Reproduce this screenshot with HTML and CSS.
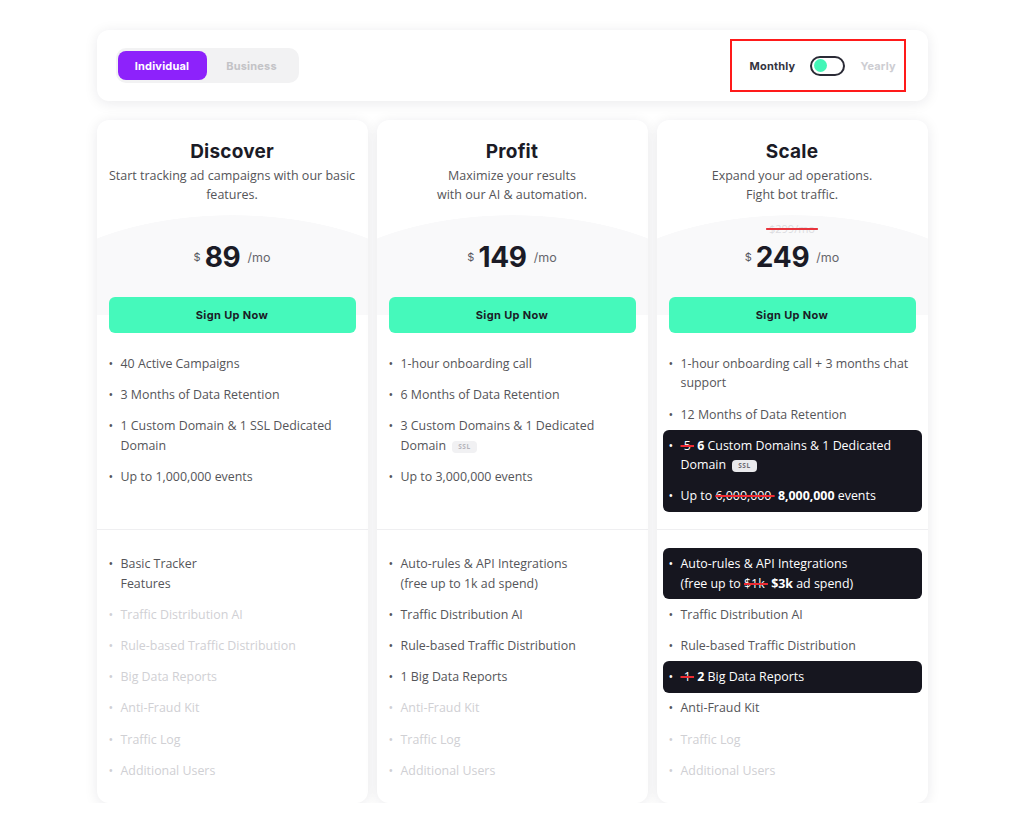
FILE: index.html
```html
<!DOCTYPE html>
<html lang="en">
<head>
<meta charset="utf-8">
<title>Pricing</title>
<link rel="stylesheet" href="styles.css">
</head>
<body>
<div class="page">
  <div class="topbar">
    <div class="seg">
      <span class="seg-btn active">Individual</span>
      <span class="seg-btn">Business</span>
    </div>
    <div class="period">
      <span class="per-on">Monthly</span>
      <span class="switch"><span class="knob"></span></span>
      <span class="per-off">Yearly</span>
    </div>
  </div>

  <div class="plans">
    <div class="card">
      <div class="head">
        <h2>Discover</h2>
        <p>Start tracking ad campaigns with our basic features.</p>
      </div>
      <div class="pricing">
        <div class="old">&nbsp;</div>
        <div class="price"><span class="cur">$</span><span class="amt">89</span><span class="per">/mo</span></div>
        <a class="cta" href="#">Sign Up Now</a>
      </div>
      <div class="feats top">
        <div class="f">40 Active Campaigns</div>
        <div class="f">3 Months of Data Retention</div>
        <div class="f">1 Custom Domain &amp; 1 SSL Dedicated Domain</div>
        <div class="f">Up to 1,000,000 events</div>
      </div>
      <div class="feats bottom">
        <div class="f">Basic Tracker<br>Features</div>
        <div class="f off">Traffic Distribution AI</div>
        <div class="f off">Rule-based Traffic Distribution</div>
        <div class="f off">Big Data Reports</div>
        <div class="f off">Anti-Fraud Kit</div>
        <div class="f off">Traffic Log</div>
        <div class="f off">Additional Users</div>
      </div>
    </div>

    <div class="card">
      <div class="head">
        <h2>Profit</h2>
        <p>Maximize your results<br>with our AI &amp; automation.</p>
      </div>
      <div class="pricing">
        <div class="old">&nbsp;</div>
        <div class="price"><span class="cur">$</span><span class="amt">149</span><span class="per">/mo</span></div>
        <a class="cta" href="#">Sign Up Now</a>
      </div>
      <div class="feats top">
        <div class="f">1-hour onboarding call</div>
        <div class="f">6 Months of Data Retention</div>
        <div class="f"><span>3 Custom Domains &amp; 1 Dedicated Domain <span class="ssl">SSL</span></span></div>
        <div class="f">Up to 3,000,000 events</div>
      </div>
      <div class="feats bottom">
        <div class="f">Auto-rules &amp; API Integrations<br>(free up to 1k ad spend)</div>
        <div class="f">Traffic Distribution AI</div>
        <div class="f">Rule-based Traffic Distribution</div>
        <div class="f">1 Big Data Reports</div>
        <div class="f off">Anti-Fraud Kit</div>
        <div class="f off">Traffic Log</div>
        <div class="f off">Additional Users</div>
      </div>
    </div>

    <div class="card">
      <div class="head">
        <h2>Scale</h2>
        <p>Expand your ad operations.<br>Fight bot traffic.</p>
      </div>
      <div class="pricing">
        <div class="old"><s>&nbsp;$299/mo&nbsp;</s></div>
        <div class="price"><span class="cur">$</span><span class="amt">249</span><span class="per">/mo</span></div>
        <a class="cta" href="#">Sign Up Now</a>
      </div>
      <div class="feats top">
        <div class="f">1-hour onboarding call + 3 months chat support</div>
        <div class="f">12 Months of Data Retention</div>
        <div class="hl">
          <div class="f"><span><s>&nbsp;5&nbsp;</s> <b>6</b> Custom Domains &amp; 1 Dedicated Domain <span class="ssl">SSL</span></span></div>
          <div class="f"><span>Up to <s>6,000,000&nbsp;</s> <b>8,000,000</b> events</span></div>
        </div>
      </div>
      <div class="feats bottom">
        <div class="hl">
          <div class="f"><span>Auto-rules &amp; API Integrations<br>(free up to <s>$1k&nbsp;</s> <b>$3k</b> ad spend)</span></div>
        </div>
        <div class="f">Traffic Distribution AI</div>
        <div class="f">Rule-based Traffic Distribution</div>
        <div class="hl">
          <div class="f"><span><s>&nbsp;1&nbsp;</s> <b>2</b> Big Data Reports</span></div>
        </div>
        <div class="f">Anti-Fraud Kit</div>
        <div class="f off">Traffic Log</div>
        <div class="f off">Additional Users</div>
      </div>
    </div>
  </div>
</div>
</body>
</html>
```

FILE: styles.css
```css
*, *::before, *::after { box-sizing: border-box; }

html, body {
  margin: 0;
  background: #ffffff;
}

body {
  font-family: "Open Sans", "Noto Sans", "Liberation Sans", sans-serif;
  color: #555559;
}

.page {
  width: 831px;
  margin: 0 auto;
  padding-top: 30px;
}

/* ---------- top bar ---------- */
.topbar {
  height: 71px;
  background: #fff;
  border-radius: 12px;
  box-shadow: 0 2px 14px rgba(20, 20, 40, 0.09);
  display: flex;
  align-items: center;
  justify-content: space-between;
  padding: 0 22px 0 19px;
}

.seg {
  width: 183px;
  height: 35px;
  background: #f2f2f3;
  border-radius: 10px;
  padding: 3px 2px;
  display: flex;
  align-items: stretch;
}

.seg-btn {
  flex: 1;
  display: flex;
  align-items: center;
  justify-content: center;
  font-family: "Inter", "Liberation Sans", sans-serif;
  font-weight: 700;
  font-size: 11px;
  letter-spacing: 0.2px;
  color: #c3c3c6;
  border-radius: 8px;
}

.seg-btn.active {
  flex: 0 0 89px;
  background: #8d22fb;
  color: #fff;
}

.period {
  width: 176px;
  height: 53px;
  border: 2px solid #ff1a1a;
  display: flex;
  align-items: center;
  padding-left: 18px;
  gap: 15px;
  font-family: "Inter", "Liberation Sans", sans-serif;
  font-weight: 700;
  font-size: 11px;
  letter-spacing: 0.2px;
}

.per-on { color: #34343f; }
.per-off { color: #cdcdd2; }

.switch {
  width: 35px;
  height: 20px;
  border: 2px solid #2b2b36;
  border-radius: 10px;
  display: flex;
  align-items: center;
  padding-left: 2px;
}

.knob {
  width: 13px;
  height: 13px;
  border-radius: 50%;
  background: #43f6b7;
}

/* ---------- plans ---------- */
.plans {
  display: grid;
  grid-template-columns: repeat(3, 271px);
  gap: 9px;
  margin-top: 19px;
}

.card {
  background: #fff;
  border-radius: 12px;
  box-shadow: 0 2px 14px rgba(20, 20, 40, 0.09);
  overflow: hidden;
}

.head {
  padding: 19px 12px 0;
  text-align: center;
}

.head h2 {
  margin: 0;
  font-family: "Inter", "Liberation Sans", sans-serif;
  font-weight: 700;
  font-size: 19px;
  line-height: 26px;
  color: #1b1b26;
  letter-spacing: 0.2px;
}

.head p {
  margin: 1px 0 0;
  font-size: 12.5px;
  line-height: 19px;
  color: #555559;
}

.pricing {
  padding: 17px 12px 0;
  background-image: radial-gradient(ellipse 217px 106px at 50% 117px, #f9f9fa 99.5%, rgba(249, 249, 250, 0) 100%);
  background-repeat: no-repeat;
  background-size: 100% calc(100% - 18px);
}

.old {
  height: 16px;
  line-height: 16px;
  text-align: center;
  font-size: 11px;
  color: #dcdce0;
}

.old s {
  text-decoration-color: #e8343c;
  text-decoration-thickness: 1.5px;
}

.price {
  margin-top: 3px;
  height: 34px;
  display: flex;
  align-items: center;
  justify-content: center;
  font-family: "Inter", "Liberation Sans", sans-serif;
}

.cur {
  font-size: 11px;
  color: #55555c;
  margin-right: 4px;
}

.amt {
  font-size: 28px;
  font-weight: 700;
  color: #1b1b26;
  letter-spacing: -0.3px;
}

.per {
  font-size: 12.5px;
  color: #66666c;
  margin-left: 7px;
}

.cta {
  display: flex;
  align-items: center;
  justify-content: center;
  height: 36px;
  margin-top: 23px;
  background: #45f9bb;
  border-radius: 6px;
  font-family: "Inter", "Liberation Sans", sans-serif;
  font-weight: 700;
  font-size: 11px;
  letter-spacing: 0.35px;
  color: #1b1b26;
  text-decoration: none;
}

/* ---------- features ---------- */
.feats {
  padding: 0 6px;
}

.feats.top {
  padding-top: 15px;
  height: 197px;
  border-bottom: 1px solid #efeff1;
}

.feats.bottom {
  padding-top: 18.4px;
  padding-bottom: 17px;
}

.f {
  display: flex;
  padding: 5.85px 6px 5.85px 0;
  font-size: 12.4px;
  line-height: 19.5px;
  color: #555559;
}

.f::before {
  content: "\2022";
  flex: 0 0 18px;
  padding-left: 6px;
}

.f.off { color: #d0d0d4; }

.hl {
  background: #16161f;
  border-radius: 6px;
}

.hl .f { color: #ffffff; }

.hl b { font-weight: 700; }

.hl s {
  text-decoration-color: #ee2b33;
  text-decoration-thickness: 1.5px;
}

.ssl {
  display: inline-block;
  vertical-align: 1px;
  margin-left: 3px;
  padding: 0 6px;
  height: 12px;
  line-height: 12px;
  border-radius: 4px;
  background: #f1f1f3;
  color: #b4b4ba;
  font-size: 6.5px;
  font-weight: 700;
  letter-spacing: 0.5px;
}

.hl .ssl {
  background: #e9e9ec;
  color: #6b6b73;
}
```
